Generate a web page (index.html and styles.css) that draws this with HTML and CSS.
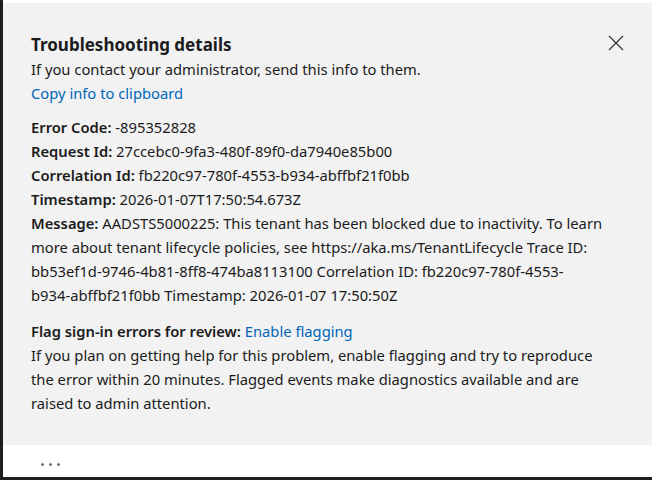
FILE: index.html
```html
<!DOCTYPE html>
<html lang="en">
<head>
<meta charset="utf-8">
<title>Troubleshooting details</title>
<link rel="stylesheet" href="styles.css">
</head>
<body>
<div class="frame">
  <section class="panel">
    <header class="panel-head">
      <h2 class="title">Troubleshooting details</h2>
      <button class="close" aria-label="Close">
        <svg width="16" height="16" viewBox="0 0 16 16"><path d="M1 1 L15 15 M15 1 L1 15" stroke="#333" stroke-width="1.2" fill="none"/></svg>
      </button>
    </header>
    <p class="line">If you contact your administrator, send this info to them.</p>
    <p class="line"><a class="link" href="#">Copy info to clipboard</a></p>

    <div class="details">
      <p class="line"><b>Error Code:</b> -895352828</p>
      <p class="line"><b>Request Id:</b> 27ccebc0-9fa3-480f-89f0-da7940e85b00</p>
      <p class="line"><b>Correlation Id:</b> fb220c97-780f-4553-b934-abffbf21f0bb</p>
      <p class="line"><b>Timestamp:</b> 2026-01-07T17:50:54.673Z</p>
      <p class="line"><b>Message:</b> AADSTS5000225: This tenant has been blocked due to inactivity. To learn<br>more about tenant lifecycle policies, see https://aka.ms/TenantLifecycle Trace ID:<br>bb53ef1d-9746-4b81-8ff8-474ba8113100 Correlation ID: fb220c97-780f-4553-<br>b934-abffbf21f0bb Timestamp: 2026-01-07 17:50:50Z</p>
    </div>

    <div class="flag">
      <p class="line"><b>Flag sign-in errors for review:</b> <a class="link" href="#">Enable flagging</a></p>
      <p class="line">If you plan on getting help for this problem, enable flagging and try to reproduce<br>the error within 20 minutes. Flagged events make diagnostics available and are<br>raised to admin attention.</p>
    </div>
  </section>
  <footer class="footer">
    <div class="dots"><span></span><span></span><span></span></div>
  </footer>
</div>
</body>
</html>
```
FILE: styles.css
```css
html, body {
  margin: 0;
  padding: 0;
  background: #ffffff;
}
body {
  font-family: "Noto Sans", "Open Sans", sans-serif;
  color: #1b1b1b;
}
.frame {
  box-sizing: border-box;
  width: 652px;
  height: 480px;
  padding-top: 3px;
  border-left: 3px solid #1e1e1e;
  border-bottom: 3px solid #1e1e1e;
  display: flex;
  flex-direction: column;
}
.panel {
  background: #f2f2f2;
  height: 442px;
  box-sizing: border-box;
  padding: 30px 28px 0 28px;
}
.panel-head {
  display: flex;
  justify-content: space-between;
  align-items: flex-start;
}
.title {
  margin: 0;
  font-size: 17px;
  font-weight: 700;
  line-height: 24px;
}
.close {
  border: 0;
  background: transparent;
  padding: 0;
  margin: 2px 0 0 0;
  width: 16px;
  height: 16px;
  cursor: pointer;
}
.close svg { display: block; }
.line {
  margin: 0;
  font-size: 14.75px;
  line-height: 24px;
  white-space: nowrap;
}
.line b { font-weight: 600; }
.link {
  color: #0067b8;
  text-decoration: none;
}
.details {
  margin-top: 10px;
}
.flag {
  margin-top: 12px;
}
.footer {
  flex: 1;
  display: flex;
  align-items: center;
  padding: 6px 0 0 38px;
}
.dots {
  display: flex;
  gap: 5px;
}
.dots span {
  width: 3px;
  height: 3px;
  border-radius: 50%;
  background: #707070;
}
```
